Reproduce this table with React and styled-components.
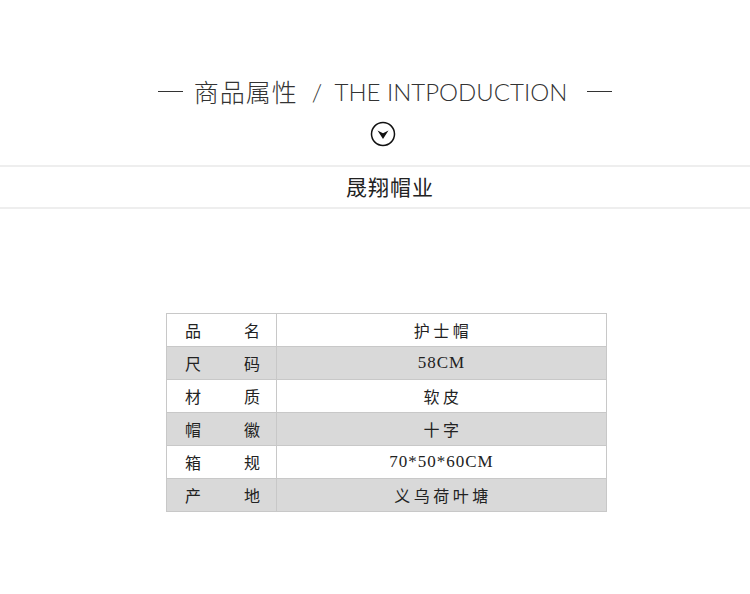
import React from "react";
import styled, { createGlobalStyle } from "styled-components";

const Global = createGlobalStyle`
  html, body { margin: 0; padding: 0; background: #fff; }
  body { width: 750px; height: 594px; overflow: hidden; }
`;

const Page = styled.div`
  width: 750px;
  display: flex;
  flex-direction: column;
  align-items: center;
`;

const TitleRow = styled.div`
  margin-top: 74px;
  height: 34px;
  padding-left: 20px;
  display: flex;
  align-items: center;
  color: #333;
`;

const Dash = styled.span`
  width: 25px;
  height: 1px;
  background: #333;
  margin: ${(p) => p.$m};
`;

const CnTitle = styled.span`
  font-family: "Noto Sans CJK SC", sans-serif;
  font-weight: 300;
  font-size: 25px;
  letter-spacing: 1px;
`;

const EnTitle = styled.span`
  font-family: "Lato", sans-serif;
  font-weight: 300;
  font-size: 24px;
  margin-left: 14px;
  white-space: pre;
`;

const Chevron = styled.svg`
  margin-top: 13px;
  margin-left: 16px;
  display: block;
`;

const Band = styled.div`
  align-self: stretch;
  margin-top: 18px;
  height: 40px;
  box-sizing: border-box;
  height: 44px;
  border-top: 2px solid #eeeeee;
  border-bottom: 2px solid #eeeeee;
  display: flex;
  align-items: center;
  justify-content: center;
  padding: 0 0 3px 30px;
  font-family: "Noto Sans CJK SC", serif;
  font-size: 21px;
  color: #222;
  letter-spacing: 1px;
`;

const Table = styled.div`
  margin-top: 104px;
  margin-left: 23px;
  width: 439px;
  border: 1px solid #c8c8c8;
  display: grid;
  grid-template-columns: 110px 1fr;
`;

const Label = styled.div`
  height: 32px;
  background: ${(p) => (p.$gray ? "#d9d9d9" : "#fff")};
  border-right: 1px solid #c8c8c8;
  border-top: ${(p) => (p.$first ? "none" : "1px solid #c8c8c8")};
  display: flex;
  align-items: center;
  justify-content: space-between;
  padding: 0 16px 0 18px;
  font-family: "Noto Sans CJK SC", serif;
  font-size: 16px;
  color: #222;
`;

const Value = styled.div`
  height: 32px;
  background: ${(p) => (p.$gray ? "#d9d9d9" : "#fff")};
  border-top: ${(p) => (p.$first ? "none" : "1px solid #c8c8c8")};
  display: flex;
  align-items: center;
  justify-content: center;
  padding-left: ${(p) => (p.$latin ? "0" : "3px")};
  font-family: "Liberation Serif", "Noto Sans CJK SC", serif;
  font-size: ${(p) => (p.$latin ? "17px" : "16px")};
  letter-spacing: ${(p) => (p.$latin ? "1px" : "3.5px")};
  color: #222;
`;

const rows = [
  ["品", "名", "护士帽"],
  ["尺", "码", "58CM"],
  ["材", "质", "软皮"],
  ["帽", "徽", "十字"],
  ["箱", "规", "70*50*60CM"],
  ["产", "地", "义乌荷叶塘"],
];

export default function App() {
  return (
    <Page>
      <Global />
      <TitleRow>
        <Dash $m="0 11px 0 0" />
        <CnTitle>商品属性</CnTitle>
        <EnTitle>/  THE INTPODUCTION</EnTitle>
        <Dash $m="0 0 0 20px" />
      </TitleRow>
      <Chevron width="26" height="26" viewBox="0 0 26 26">
        <circle cx="13" cy="13" r="11.5" fill="none" stroke="#111" strokeWidth="1.5" />
        <path d="M7.5 9.5 L13 18 L18.5 9.5 L13 12.2 Z" fill="#111" />
      </Chevron>
      <Band>晟翔帽业</Band>
      <Table>
        {rows.map(([a, b, v], i) => {
          const latin = /^[\x00-\x7f]+$/.test(v);
          return (
            <React.Fragment key={i}>
              <Label $gray={i % 2 === 1} $first={i === 0}>
                <span>{a}</span>
                <span>{b}</span>
              </Label>
              <Value $gray={i % 2 === 1} $first={i === 0} $latin={latin}>{v}</Value>
            </React.Fragment>
          );
        })}
      </Table>
    </Page>
  );
}
